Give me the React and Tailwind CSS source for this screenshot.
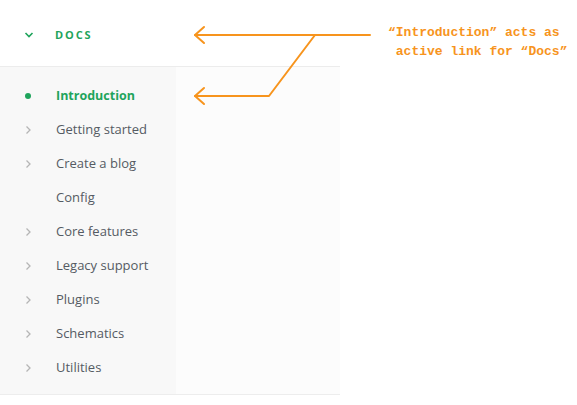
import React from 'react';

const items = [
  { label: 'Getting started', chevron: true },
  { label: 'Create a blog', chevron: true },
  { label: 'Config', chevron: false },
  { label: 'Core features', chevron: true },
  { label: 'Legacy support', chevron: true },
  { label: 'Plugins', chevron: true },
  { label: 'Schematics', chevron: true },
  { label: 'Utilities', chevron: true },
];

const ChevronRight = () => (
  <svg width="10" height="10" viewBox="0 0 10 10" fill="none">
    <path d="M3.5 1.5 L7 5 L3.5 8.5" stroke="#b5b5b5" strokeWidth="1.3" />
  </svg>
);

const ChevronDown = () => (
  <svg width="10" height="10" viewBox="0 0 10 10" fill="none">
    <path d="M1.5 3 L5 6.5 L8.5 3" stroke="#1fa45c" strokeWidth="1.6" />
  </svg>
);

const App = () => {
  return (
    <div className="relative w-[577px] h-[405px] bg-white overflow-hidden" style={{ fontFamily: '"Open Sans", sans-serif' }}>
      <div className="w-[340px]">
        {/* Docs header */}
        <div className="h-[67px] pt-[4px] flex items-center bg-white border-b border-[#ececec]">
          <div className="w-[55px] flex justify-center pl-[2px]">
            <ChevronDown />
          </div>
          <span className="text-[11px] font-bold tracking-[0.17em] text-[#1fa45c]">DOCS</span>
        </div>

        {/* Nav list */}
        <div className="flex border-b border-[#ededed]">
          <div className="w-[176px] bg-[#f8f8f8] pt-[12px] pb-[9px]">
            <div className="h-[34px] flex items-center">
              <div className="w-[56px] flex justify-center">
                <span className="block w-[6px] h-[6px] rounded-full bg-[#1fa45c]" />
              </div>
              <span className="text-[12.5px] font-bold text-[#1fa45c]">Introduction</span>
            </div>
            {items.map((item) => (
              <div key={item.label} className="h-[34px] flex items-center">
                <div className="w-[56px] flex justify-center">
                  {item.chevron && <ChevronRight />}
                </div>
                <span className="text-[13px] text-[#555b63]">{item.label}</span>
              </div>
            ))}
          </div>
          <div className="flex-1 bg-[#fcfcfc]" />
        </div>
      </div>

      {/* Annotation arrows */}
      <svg className="absolute left-0 top-0" width="577" height="405" fill="none">
        <g stroke="#f7941d" strokeWidth="2" strokeLinecap="round" strokeLinejoin="round">
          <path d="M195 35 L370 35" />
          <path d="M204 27 L195 35 L204 43" />
          <path d="M315 35 L269 96 L195 96" />
          <path d="M204 88 L195 96 L204 104" />
        </g>
      </svg>

      {/* Annotation text */}
      <div
        className="absolute left-[388px] top-[23px] text-[13px] leading-[19px] font-bold text-[#f7941d] whitespace-pre"
        style={{ fontFamily: '"Liberation Mono", monospace' }}
      >
        <div>“Introduction” acts as</div>
        <div> active link for “Docs”</div>
      </div>
    </div>
  );
};

export default App;
